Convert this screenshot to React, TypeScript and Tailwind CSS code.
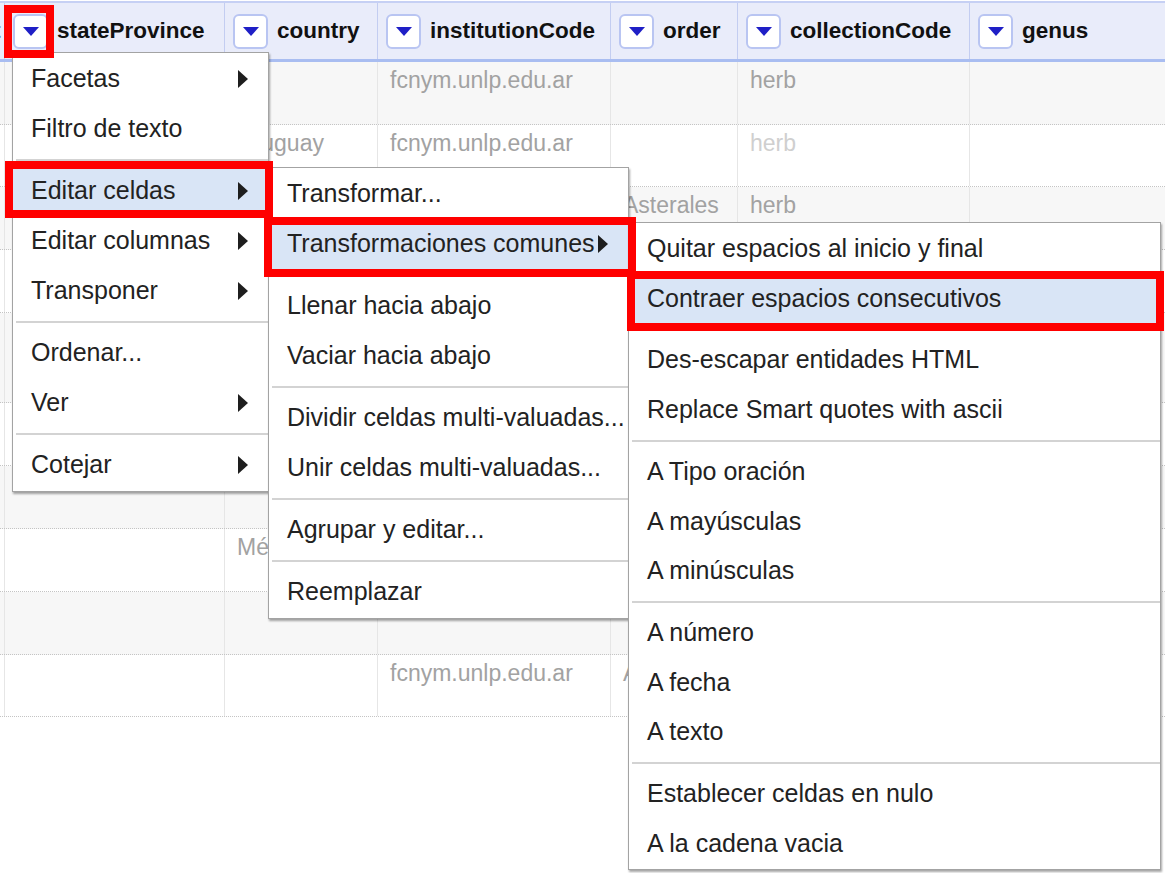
import React from 'react';

type Cell = { text?: string; light?: boolean };
type Row = { h: string; bg: string; cells: Cell[] };

const cols = [
  { w: 'w-[5px]', name: '' },
  { w: 'w-[220px]', name: 'stateProvince' },
  { w: 'w-[153px]', name: 'country' },
  { w: 'w-[233px]', name: 'institutionCode' },
  { w: 'w-[127px]', name: 'order' },
  { w: 'w-[232px]', name: 'collectionCode' },
  { w: 'flex-1', name: 'genus' },
];

const inst = 'fcnym.unlp.edu.ar';

const rows: Row[] = [
  { h: 'h-[63px]', bg: 'bg-[#f7f7f7]', cells: [{}, {}, {}, { text: inst }, {}, { text: 'herb' }, {}] },
  { h: 'h-[62px]', bg: 'bg-white', cells: [{}, {}, { text: 'Uruguay' }, { text: inst }, {}, { text: 'herb', light: true }, {}] },
  { h: 'h-[63px]', bg: 'bg-[#f7f7f7]', cells: [{}, {}, {}, {}, { text: 'Asterales' }, { text: 'herb' }, {}] },
  { h: 'h-[63px]', bg: 'bg-white', cells: [{}, {}, {}, { text: inst }, {}, { text: 'herb' }, {}] },
  { h: 'h-[90px]', bg: 'bg-[#f7f7f7]', cells: [{}, {}, {}, { text: inst }, {}, { text: 'herb' }, {}] },
  { h: 'h-[63px]', bg: 'bg-white', cells: [{}, {}, {}, { text: inst }, {}, { text: 'herb' }, {}] },
  { h: 'h-[63px]', bg: 'bg-[#f7f7f7]', cells: [{}, {}, {}, {}, {}, {}, {}] },
  { h: 'h-[63px]', bg: 'bg-white', cells: [{}, {}, { text: 'México' }, {}, {}, {}, {}] },
  { h: 'h-[63px]', bg: 'bg-[#f7f7f7]', cells: [{}, {}, {}, {}, {}, {}, {}] },
  { h: 'h-[62px]', bg: 'bg-white', cells: [{}, {}, {}, { text: inst }, { text: 'Asterales' }, { text: 'herb' }, {}] },
];

function DropButton() {
  return (
    <div className="w-[35px] h-[35px] shrink-0 rounded-[6px] border-2 border-[#b9c5f2] bg-white flex items-center justify-center">
      <svg width="16" height="9" viewBox="0 0 16 9">
        <path d="M0 0 L16 0 L8 9 Z" fill="#1f1fc6" />
      </svg>
    </div>
  );
}

function Arrow() {
  return (
    <svg width="10" height="18" viewBox="0 0 10 18" className="absolute right-[20px] top-1/2 -translate-y-1/2">
      <path d="M0 0 L10 9 L0 18 Z" fill="#1e1e1e" />
    </svg>
  );
}

type Item = { label?: string; sub?: boolean; active?: boolean; sep?: boolean };

function Menu({ items, className, itemH }: { items: Item[]; className: string; itemH: string }) {
  return (
    <div className={`absolute bg-white border border-[#a3a3a3] shadow-[1px_2px_2px_rgba(0,0,0,0.35)] py-[1px] ${className}`}>
      {items.map((it, i) =>
        it.sep ? (
          <div key={i} className="h-[12px] flex items-center pl-[3px]">
            <div className="h-[2px] w-full bg-[#d3d3d3]" />
          </div>
        ) : (
          <div
            key={i}
            className={`relative ${itemH} flex items-center pl-[18px] text-[25px] text-[#222] whitespace-nowrap ${it.active ? 'bg-[#d9e5f6]' : ''}`}
          >
            {it.label}
            {it.sub && <Arrow />}
          </div>
        )
      )}
    </div>
  );
}

export default function App() {
  const main: Item[] = [
    { label: 'Facetas', sub: true },
    { label: 'Filtro de texto' },
    { sep: true },
    { label: 'Editar celdas', sub: true, active: true },
    { label: 'Editar columnas', sub: true },
    { label: 'Transponer', sub: true },
    { sep: true },
    { label: 'Ordenar...' },
    { label: 'Ver', sub: true },
    { sep: true },
    { label: 'Cotejar', sub: true },
  ];

  const editCells: Item[] = [
    { label: 'Transformar...' },
    { label: 'Transformaciones comunes', sub: true, active: true },
    { sep: true },
    { label: 'Llenar hacia abajo' },
    { label: 'Vaciar hacia abajo' },
    { sep: true },
    { label: 'Dividir celdas multi-valuadas...' },
    { label: 'Unir celdas multi-valuadas...' },
    { sep: true },
    { label: 'Agrupar y editar...' },
    { sep: true },
    { label: 'Reemplazar' },
  ];

  const common: Item[] = [
    { label: 'Quitar espacios al inicio y final' },
    { label: 'Contraer espacios consecutivos', active: true },
    { sep: true },
    { label: 'Des-escapar entidades HTML' },
    { label: 'Replace Smart quotes with ascii' },
    { sep: true },
    { label: 'A Tipo oración' },
    { label: 'A mayúsculas' },
    { label: 'A minúsculas' },
    { sep: true },
    { label: 'A número' },
    { label: 'A fecha' },
    { label: 'A texto' },
    { sep: true },
    { label: 'Establecer celdas en nulo' },
    { label: 'A la cadena vacia' },
  ];

  return (
    <div className="relative w-[1165px] h-[873px] overflow-hidden bg-white font-['Liberation_Sans',Arial,sans-serif]">
      {/* header */}
      <div className="mt-[1px] h-[61px] flex bg-[#e9ecfa] border-t-2 border-b-[3px] border-t-[#c6d0f4] border-b-[#a9bdf1]">
        {cols.map((c, i) => (
          <div
            key={i}
            className={`${c.w} shrink-0 flex items-center overflow-hidden ${i < cols.length - 1 ? 'border-r border-[#c3cdf1]' : ''} ${c.name ? 'pl-[8px] gap-[9px]' : ''}`}
          >
            {c.name ? (
              <>
                <DropButton />
                <span className="text-[22.5px] font-bold text-[#111] whitespace-nowrap">{c.name}</span>
              </>
            ) : (
              <span className="text-[22.5px] font-bold text-[#111] -ml-[7px]">t</span>
            )}
          </div>
        ))}
      </div>

      {/* rows */}
      {rows.map((r, ri) => (
        <div key={ri} className={`flex ${r.h} ${r.bg} border-b border-dotted border-[#c4c4c4]`}>
          {cols.map((c, ci) => {
            const cell = r.cells[ci] || {};
            return (
              <div
                key={ci}
                className={`${c.w} shrink-0 overflow-hidden whitespace-nowrap ${ci > 0 ? 'pl-[12px]' : ''} pt-[5px] text-[23px] leading-[26px] ${cell.light ? 'text-[#cfcfcf]' : 'text-[#a2a2a2]'} ${ci < cols.length - 1 ? 'border-r border-[#e6e6e6]' : ''}`}
              >
                {cell.text}
              </div>
            );
          })}
        </div>
      ))}

      {/* menus */}
      <Menu items={main} itemH="h-[50px]" className="left-[12px] top-[52px] w-[257px]" />
      <Menu items={editCells} itemH="h-[50px]" className="left-[268px] top-[167px] w-[361px]" />
      <Menu items={common} itemH="h-[49.7px]" className="left-[628px] top-[222px] w-[533px]" />

      {/* annotation boxes */}
      <div className="absolute left-[4px] top-[5px] w-[50px] h-[53px] border-[8px] border-[#ff0000]" />
      <div className="absolute left-[5px] top-[161px] w-[268px] h-[57px] border-[8px] border-[#ff0000]" />
      <div className="absolute left-[264px] top-[217px] w-[372px] h-[60px] border-[8px] border-[#ff0000]" />
      <div className="absolute left-[627px] top-[271px] w-[537px] h-[60px] border-[8px] border-[#ff0000]" />
    </div>
  );
}
